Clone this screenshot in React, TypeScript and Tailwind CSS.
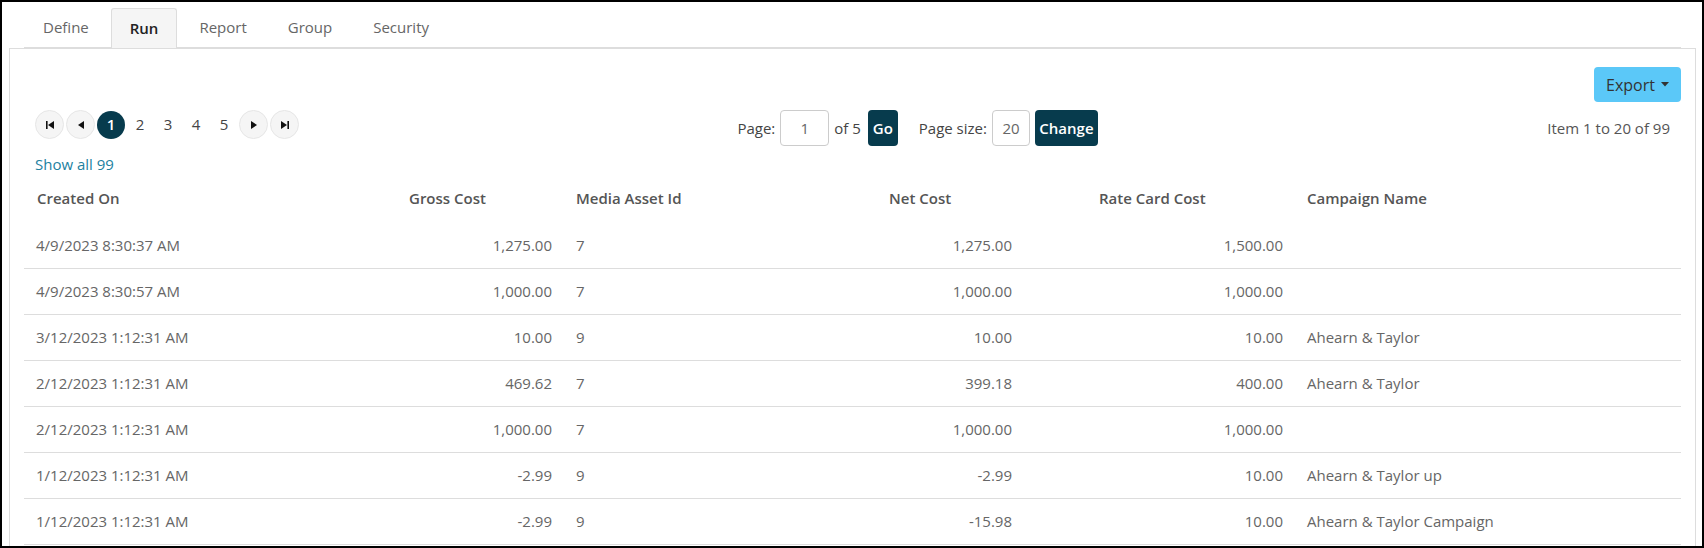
import React from 'react'

type Row = {
  created: string
  gross: string
  asset: string
  net: string
  rate: string
  campaign: string
}

const rows: Row[] = [
  { created: '4/9/2023 8:30:37 AM', gross: '1,275.00', asset: '7', net: '1,275.00', rate: '1,500.00', campaign: '' },
  { created: '4/9/2023 8:30:57 AM', gross: '1,000.00', asset: '7', net: '1,000.00', rate: '1,000.00', campaign: '' },
  { created: '3/12/2023 1:12:31 AM', gross: '10.00', asset: '9', net: '10.00', rate: '10.00', campaign: 'Ahearn & Taylor' },
  { created: '2/12/2023 1:12:31 AM', gross: '469.62', asset: '7', net: '399.18', rate: '400.00', campaign: 'Ahearn & Taylor' },
  { created: '2/12/2023 1:12:31 AM', gross: '1,000.00', asset: '7', net: '1,000.00', rate: '1,000.00', campaign: '' },
  { created: '1/12/2023 1:12:31 AM', gross: '-2.99', asset: '9', net: '-2.99', rate: '10.00', campaign: 'Ahearn & Taylor up' },
  { created: '1/12/2023 1:12:31 AM', gross: '-2.99', asset: '9', net: '-15.98', rate: '10.00', campaign: 'Ahearn & Taylor Campaign' },
]

const tabs = ['Define', 'Run', 'Report', 'Group', 'Security']

const cols = 'grid grid-cols-[373px_167px_313px_147px_271px_1fr]'

function NavButton({ kind }: { kind: 'first' | 'prev' | 'next' | 'last' }) {
  return (
    <button className="w-[29px] h-[29px] rounded-full bg-[#f5f5f5] border border-[#e6e6e6] flex items-center justify-center">
      <svg width="10" height="10" viewBox="0 0 10 10" fill="#111">
        {kind === 'first' && (
          <>
            <rect x="1" y="1" width="1.6" height="8" />
            <path d="M9 1 L3 5 L9 9 Z" />
          </>
        )}
        {kind === 'prev' && <path d="M8 1 L2 5 L8 9 Z" />}
        {kind === 'next' && <path d="M2 1 L8 5 L2 9 Z" />}
        {kind === 'last' && (
          <>
            <path d="M1 1 L7 5 L1 9 Z" />
            <rect x="7.4" y="1" width="1.6" height="8" />
          </>
        )}
      </svg>
    </button>
  )
}

export default function App() {
  return (
    <div className="w-[1704px] h-[548px] border-2 border-black overflow-hidden bg-white font-['Open_Sans',sans-serif] text-[15px] text-[#666]">
      {/* tabs */}
      <div className="mt-[6px] ml-[22px] mr-[21px] flex gap-[3px] border-b border-[#ddd] h-[40px]">
        {tabs.map((t) =>
          t === 'Run' ? (
            <div
              key={t}
              className="px-[18px] h-[40px] flex items-center bg-[#f5f5f5] border border-b-0 border-[#ddd] rounded-t-[3px] font-semibold text-[#222]"
            >
              {t}
            </div>
          ) : (
            <div key={t} className="px-[19px] h-[39px] flex items-center">
              {t}
            </div>
          )
        )}
      </div>

      {/* panel */}
      <div className="ml-[7px] mr-[6px] h-[600px] border border-[#ddd]">
        <div className="flex justify-end pt-[18px] pr-[14px]">
          <button className="w-[87px] h-[35px] rounded-[4px] bg-[#5bc8f8] text-[#333] text-[16px] flex items-center justify-center gap-[6px]">
            Export
            <svg width="8" height="5" viewBox="0 0 8 5" fill="#333">
              <path d="M0 0 L8 0 L4 4.5 Z" />
            </svg>
          </button>
        </div>

        <div className="mt-[8px] px-[25px] flex justify-between items-start">
          <div className="flex items-center gap-[2px]">
            <NavButton kind="first" />
            <NavButton kind="prev" />
            <div className="w-[28px] h-[28px] rounded-full bg-[#073b4d] text-white font-semibold flex items-center justify-center">
              1
            </div>
            {['2', '3', '4', '5'].map((n) => (
              <div key={n} className="w-[26px] text-center text-[#444]">
                {n}
              </div>
            ))}
            <NavButton kind="next" />
            <NavButton kind="last" />
          </div>

          <div className="flex items-center h-[36px] mr-[11px]">
            <span className="text-[#444]">Page:</span>
            <div className="ml-[5px] w-[49px] h-[36px] border border-[#ccc] rounded-[4px] flex items-center justify-center">
              1
            </div>
            <span className="ml-[5px] text-[#444]">of 5</span>
            <button className="ml-[7px] w-[30px] h-[36px] rounded-[4px] bg-[#073b4d] text-white font-semibold">
              Go
            </button>
            <span className="ml-[21px] text-[#444]">Page size:</span>
            <div className="ml-[5px] w-[38px] h-[36px] border border-[#ccc] rounded-[4px] flex items-center justify-center">
              20
            </div>
            <button className="ml-[5px] w-[63px] h-[36px] rounded-[4px] bg-[#073b4d] text-white font-semibold">
              Change
            </button>
          </div>

          <div className="leading-[36px] text-[#555]">Item 1 to 20 of 99</div>
        </div>

        <div className="mt-[8px] pl-[25px] leading-5">
          <a href="#" className="text-[#22819f]">
            Show all 99
          </a>
        </div>

        <div className="mx-[14px]">
          <div className={`${cols} h-[49px] items-center font-semibold text-[#555]`}>
            <div className="pl-[13px]">Created On</div>
            <div className="pl-3">Gross Cost</div>
            <div className="pl-3">Media Asset Id</div>
            <div className="pl-3">Net Cost</div>
            <div className="pl-[75px]">Rate Card Cost</div>
            <div className="pl-3">Campaign Name</div>
          </div>
          {rows.map((r, i) => (
            <div key={i} className={`${cols} h-[46px] items-center border-b border-[#ddd]`}>
              <div className="pl-3">{r.created}</div>
              <div className="pr-3 text-right">{r.gross}</div>
              <div className="pl-3">{r.asset}</div>
              <div className="pr-3 text-right">{r.net}</div>
              <div className="pr-3 text-right">{r.rate}</div>
              <div className="pl-3">{r.campaign}</div>
            </div>
          ))}
        </div>
      </div>
    </div>
  )
}
